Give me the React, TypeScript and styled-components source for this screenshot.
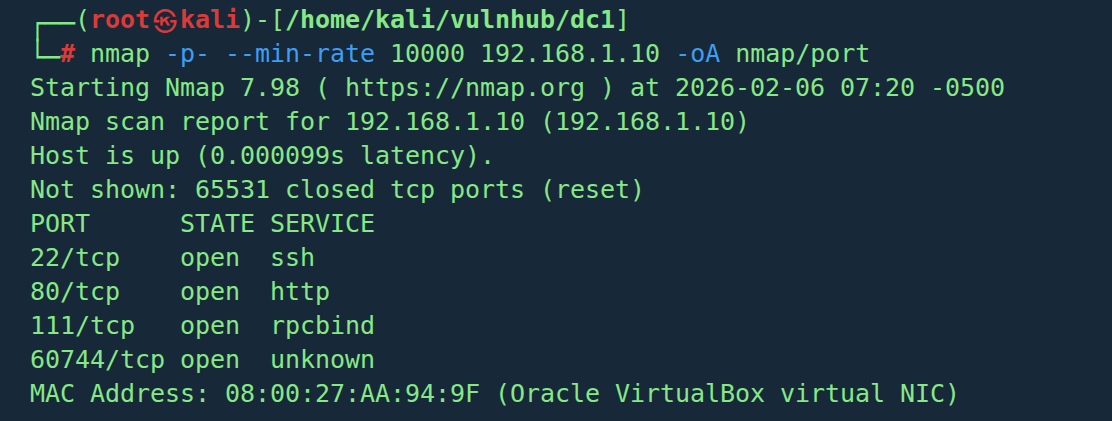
import React from "react";
import styled, { createGlobalStyle } from "styled-components";

const Global = createGlobalStyle`
  html, body {
    margin: 0;
    padding: 0;
    background: #172838;
  }
`;

const palette = {
  green: "#86e886",
  red: "#d93a3a",
  blue: "#3d9ef2",
};

type Tone = keyof typeof palette;

const Terminal = styled.div`
  box-sizing: border-box;
  width: 1112px;
  height: 421px;
  padding: 3px 0 0 30px;
  background: #172838;
  font-family: "DejaVu Sans Mono", "Liberation Mono", monospace;
  font-size: 25px;
  line-height: 34px;
  letter-spacing: -0.05px;
  color: ${palette.green};
  display: flex;
  flex-direction: column;
`;

const Line = styled.div`
  white-space: pre;
  height: 34px;
`;

const Seg = styled.span<{ $tone?: Tone; $bold?: boolean }>`
  color: ${(p) => palette[p.$tone ?? "green"]};
  font-weight: ${(p) => (p.$bold ? 700 : 400)};
`;

const Box = styled.span`
  display: inline-block;
  transform: translateY(5px) scaleY(1.25);
  transform-origin: 50% 58%;
`;

const Symbol = styled.span`
  display: inline-block;
  width: 30px;
  text-align: center;
  color: ${palette.red};
  font-family: "Noto Sans CJK KR", "Noto Sans CJK SC", sans-serif;
  font-weight: 700;
  font-size: 24px;
  vertical-align: top;
`;

const output = [
  "Starting Nmap 7.98 ( https://nmap.org ) at 2026-02-06 07:20 -0500",
  "Nmap scan report for 192.168.1.10 (192.168.1.10)",
  "Host is up (0.000099s latency).",
  "Not shown: 65531 closed tcp ports (reset)",
  "PORT      STATE SERVICE",
  "22/tcp    open  ssh",
  "80/tcp    open  http",
  "111/tcp   open  rpcbind",
  "60744/tcp open  unknown",
  "MAC Address: 08:00:27:AA:94:9F (Oracle VirtualBox virtual NIC)",
];

export default function App() {
  return (
    <>
      <Global />
      <Terminal>
        <Line>
          <Box>┌──</Box>
          <Seg>(</Seg>
          <Seg $tone="red" $bold>
            root
          </Seg>
          <Symbol>㉿</Symbol>
          <Seg $tone="red" $bold>
            kali
          </Seg>
          <Seg>)-[</Seg>
          <Seg $bold>/home/kali/vulnhub/dc1</Seg>
          <Seg>]</Seg>
        </Line>
        <Line>
          <Box>└─</Box>
          <Seg $tone="red" $bold>
            #
          </Seg>
          <Seg> nmap </Seg>
          <Seg $tone="blue">-p-</Seg>
          <Seg> </Seg>
          <Seg $tone="blue">--min-rate</Seg>
          <Seg> 10000 192.168.1.10 </Seg>
          <Seg $tone="blue">-oA</Seg>
          <Seg> nmap/port</Seg>
        </Line>
        {output.map((text, i) => (
          <Line key={i}>{text}</Line>
        ))}
      </Terminal>
    </>
  );
}
